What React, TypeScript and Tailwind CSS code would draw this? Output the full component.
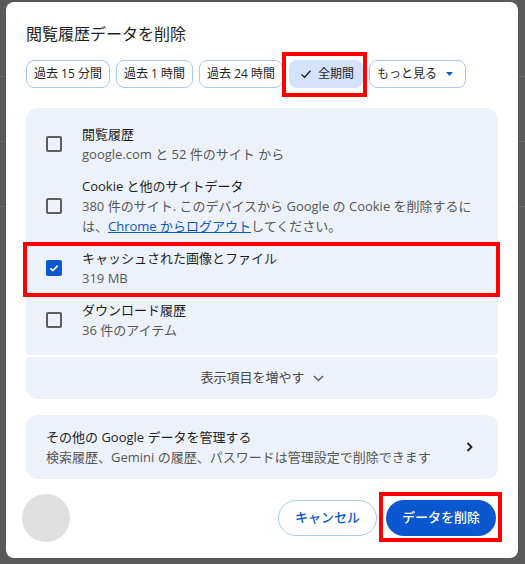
import React from "react";

const CheckSmall = () => (
  <svg width="12" height="12" viewBox="0 0 12 12" fill="none">
    <path d="M1.5 6.5 L4.5 9.3 L10.5 2.8" stroke="#1f1f1f" strokeWidth="1.3" />
  </svg>
);

function Checkbox({ checked }: { checked?: boolean }) {
  if (checked) {
    return (
      <div className="flex h-[16px] w-[16px] shrink-0 items-center justify-center rounded-[2px] bg-[#0b57d0]">
        <svg width="12" height="12" viewBox="0 0 12 12" fill="none">
          <path d="M2.3 6.3 L4.8 8.6 L9.7 3.6" stroke="#ffffff" strokeWidth="1.6" />
        </svg>
      </div>
    );
  }
  return <div className="h-[16px] w-[16px] shrink-0 rounded-[2px] border-2 border-[#5e5e5e]" />;
}

function Row({
  checked,
  title,
  children,
  highlight,
}: {
  checked?: boolean;
  title: React.ReactNode;
  children: React.ReactNode;
  highlight?: boolean;
}) {
  return (
    <div className="relative flex items-center gap-[20px] py-[6px] pl-[20px] pr-[16px]">
      <Checkbox checked={checked} />
      <div className="flex flex-col text-[13px] leading-[20px]">
        <div className="text-[#1f1f1f]">{title}</div>
        <div className="text-[#575757]">{children}</div>
      </div>
      {highlight && (
        <div className="pointer-events-none absolute -left-[3px] -right-[2px] top-0 -bottom-[3px] border-[4px] border-[#ff0000]" />
      )}
    </div>
  );
}

const chip =
  "flex h-[28px] items-center rounded-[8px] border border-[#a8c7fa] px-[7px] text-[12px] text-[#1f1f1f]";

export default function App() {
  return (
    <div className="relative h-[564px] w-[525px] overflow-hidden bg-[#595959] font-['Open_Sans','Noto_Sans_CJK_JP',sans-serif]">
      <div className="flex flex-col">
        <div className="h-[77px] border-b border-[#6a6a6a]" />
        <div className="h-[65px] border-b border-[#6a6a6a]" />
        <div className="h-[65px] border-b border-[#6a6a6a]" />
      </div>

      <div className="absolute left-[6px] top-[2px] flex h-[556px] w-[512px] flex-col rounded-[8px] bg-white px-[20px] pt-[20px]">
        <h1 className="text-[16px] leading-[24px] text-[#1f1f1f]">閲覧履歴データを削除</h1>

        <div className="mt-[14px] flex gap-[6px]">
          <div className={chip}>過去 15 分間</div>
          <div className={chip}>過去 1 時間</div>
          <div className={chip}>過去 24 時間</div>
          <div className="relative flex h-[28px] items-center gap-[6px] rounded-[8px] bg-[#d3e3fd] pl-[11px] pr-[9px] text-[12px] text-[#1f1f1f]">
            <CheckSmall />
            全期間
            <div className="pointer-events-none absolute -left-[7px] -right-[4px] -top-[8px] -bottom-[9px] border-[4px] border-[#ff0000]" />
          </div>
          <div className="flex h-[28px] items-center gap-[9px] rounded-[8px] border border-[#a8c7fa] pl-[7px] pr-[12px] text-[12px] text-[#1f1f1f]">
            もっと見る
            <svg width="7" height="4" viewBox="0 0 7 4">
              <path d="M0 0 L7 0 L3.5 4 Z" fill="#0b57d0" />
            </svg>
          </div>
        </div>

        <div className="mt-[20px] flex flex-col gap-[2px]">
          <div className="rounded-t-[12px] rounded-b-[4px] bg-[#edf2fa] pb-[9px] pt-[10px]">
            <Row title="閲覧履歴">google.com と 52 件のサイト から</Row>
            <Row title="Cookie と他のサイトデータ">
              380 件のサイト. このデバイスから Google の Cookie を削除するに
              <br />
              は、
              <span className="text-[#0b57d0] underline">Chrome からログアウト</span>
              してください。
            </Row>
            <Row checked highlight title="キャッシュされた画像とファイル">
              319 MB
            </Row>
            <Row title="ダウンロード履歴">36 件のアイテム</Row>
          </div>
          <div className="flex h-[42px] items-center justify-center gap-[8px] rounded-b-[12px] rounded-t-[4px] bg-[#edf2fa] text-[13px] text-[#474747]">
            表示項目を増やす
            <svg width="11" height="7" viewBox="0 0 11 7" fill="none">
              <path d="M1 1 L5.5 5.5 L10 1" stroke="#5e5e5e" strokeWidth="1.5" />
            </svg>
          </div>
        </div>

        <div className="mt-[16px] flex items-center justify-between rounded-[12px] bg-[#edf2fa] py-[12px] pl-[20px] pr-[25px]">
          <div className="flex flex-col text-[13px] leading-[20px]">
            <div className="text-[#1f1f1f]">その他の Google データを管理する</div>
            <div className="text-[#575757]">検索履歴、Gemini の履歴、パスワードは管理設定で削除できます</div>
          </div>
          <svg width="7" height="10" viewBox="0 0 7 10" fill="none">
            <path d="M1.5 1 L5.5 5 L1.5 9" stroke="#1f1f1f" strokeWidth="1.8" />
          </svg>
        </div>

        <div className="ml-[-4px] mr-[2px] mt-[15px] flex items-center justify-between">
          <div className="h-[48px] w-[48px] rounded-full bg-[#e0e0e0]" />
          <div className="flex items-center gap-[9px]">
            <button className="h-[36px] rounded-full border border-[#a8c7fa] px-[16px] text-[13px] font-medium text-[#0b57d0]">
              キャンセル
            </button>
            <div className="relative">
              <button className="h-[36px] rounded-full bg-[#0b57d0] px-[16px] text-[13px] font-medium text-white">
                データを削除
              </button>
              <div className="pointer-events-none absolute -left-[7px] -right-[6px] -top-[8px] -bottom-[6px] border-[4px] border-[#ff0000]" />
            </div>
          </div>
        </div>
      </div>
    </div>
  );
}
